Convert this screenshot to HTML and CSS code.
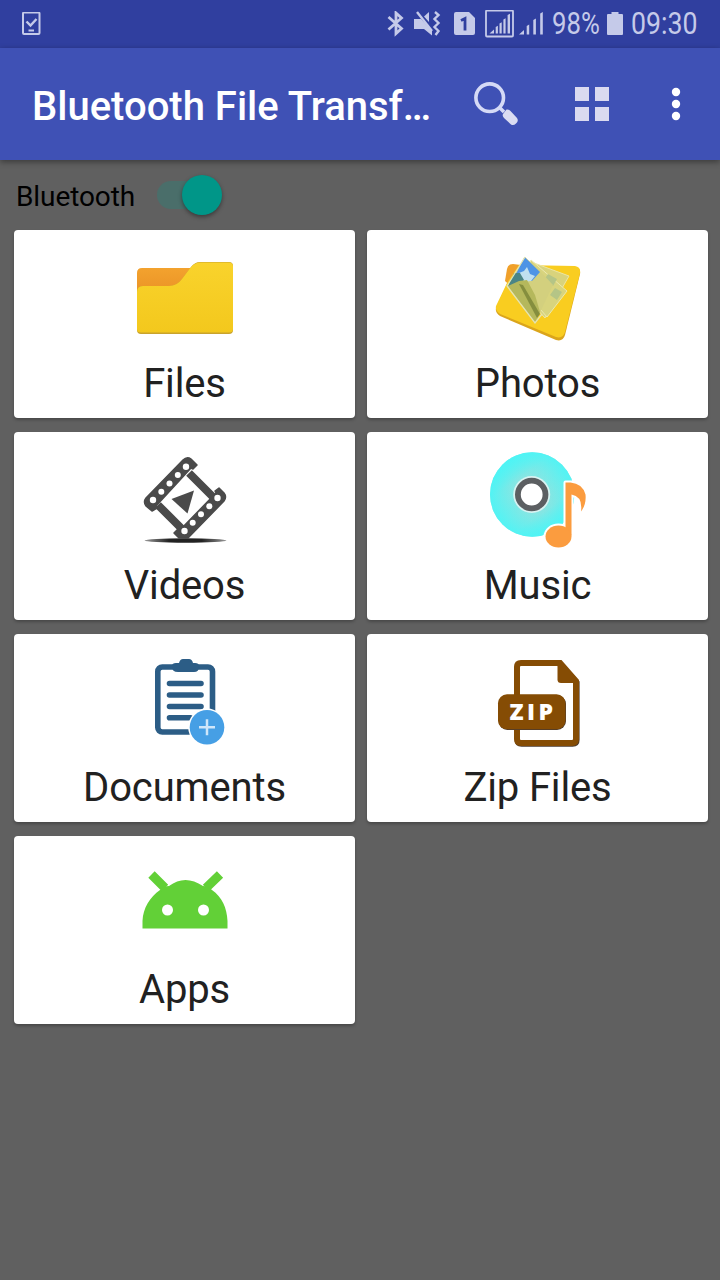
FILE: index.html
```html
<!DOCTYPE html>
<html lang="en">
<head>
    <meta charset="UTF-8">
    <meta name="viewport" content="width=device-width, initial-scale=1.0">
    <title>Bluetooth File Transfer</title>
    <link rel="stylesheet" href="styles.css">
</head>
<body>
    <div class="status-bar">
        <svg class="task-icon" width="20" height="24" viewBox="0 0 20 24" fill="none" stroke="#c5cae9" stroke-width="2">
            <rect x="2" y="0.500" width="16.500" height="21.500" rx="1"/>
            <path d="M5.500 9.500l4 4 6-6.500" stroke-width="2.400"/>
            <path d="M7.500 18.500h5.500"/>
        </svg>
        <div class="status-icons">
            <svg class="bt-icon" width="18" height="26" viewBox="0 0 18 26" fill="none" stroke="#c5cae9" stroke-width="2.800">
                <path d="M1.500 6L14.500 17.500L9 22.500V2L14.500 7L1.500 18.500"/>
            </svg>
            <svg class="mute-icon" width="28" height="26" viewBox="0 0 28 26" fill="#c5cae9">
                <path d="M0 8h7l11 12v4.500l-8-6.500H0z"/>
                <path d="M10 5.500l5-4.500v10z"/>
                <path d="M3 1l15 19" stroke="#c5cae9" stroke-width="2.400"/>
                <path d="M21 1l3.500 3-4 4 4 4-4 4 4 4-3 4" fill="none" stroke="#c5cae9" stroke-width="2.400"/>
            </svg>
            <svg class="sim-icon" width="21" height="24" viewBox="0 0 21 24">
                <path d="M2 0h13l6 6v15q0 2-2 2H2q-2 0-2-2V2q0-2 2-2z" fill="#c5cae9"/>
                <path d="M7 8.500l4-2v12" fill="none" stroke="#303f9f" stroke-width="2.800"/>
            </svg>
            <svg class="signal-box" width="29" height="28" viewBox="0 0 29 28" fill="#c5cae9">
                <rect x="1" y="0.500" width="27" height="26" rx="1" fill="none" stroke="#c5cae9" stroke-width="1.800"/>
                <path d="M4.500 23.500l4.500-4v4zM10.700 17l2.200-1.200v7.700h-2.200zM14.500 13.500l2.200-1.200v11.200h-2.200zM18.400 9.500l2.200-1.200v15.200h-2.200zM22.600 5l2.400-1.200v19.700h-2.400z"/>
            </svg>
            <svg class="signal-icon" width="25" height="24" viewBox="0 0 25 24" fill="#c5cae9">
                <path d="M0 22.500l5-4.500v4.500zM7.700 14l2.500-1.500v10H7.700zM14.300 8l2.600-1.500v16h-2.600zM21.200 1.500l2.600-1.500v22.500h-2.600z"/>
            </svg>
            <span class="battery-text">98%</span>
            <svg class="battery-icon" width="16" height="24" viewBox="0 0 16 24">
                <path d="M4.500 0h7v2H15q1 0 1 1v19q0 1-1 1H1q-1 0-1-1V3q0-1 1-1h3.500z" fill="#c5cae9"/>
            </svg>
            <span class="clock">09:30</span>
        </div>
    </div>

    <div class="app-bar">
        <h1 class="title">Bluetooth File Transf…</h1>
        <svg class="search-icon" width="48" height="48" viewBox="0 0 48 48" fill="none" stroke="#d5daf6">
            <circle cx="17.700" cy="17.700" r="13.800" stroke-width="3.600"/>
            <path d="M27 27l5 5" stroke-width="3.500"/>
            <path d="M31 34l3.500-4.500q2-.5 4 1.500l6.500 7q2 3-1 5.500-2.500 2.500-5 1l-7-6.500q-2-2-1-4z" fill="#dadcf2" stroke="none"/>
        </svg>
        <svg class="grid-icon" width="34" height="34" viewBox="0 0 34 34" fill="#dadaf0">
            <path d="M0 0h14v14H0zM20 0h14v14H20zM0 20h14v14H0zM20 20h14v14H20z"/>
        </svg>
        <svg class="more-icon" width="10" height="34" viewBox="0 0 10 34" fill="#fff">
            <circle cx="5" cy="5" r="4.200"/>
            <circle cx="5" cy="17" r="4.200"/>
            <circle cx="5" cy="29" r="4.200"/>
        </svg>
    </div>

    <div class="switch-row">
        <span class="switch-label">Bluetooth</span>
        <div class="switch"><div class="thumb"></div></div>
    </div>

    <div class="grid">
        <div class="card">
            <svg class="icon" viewBox="0 0 96 96">
                <defs>
                    <linearGradient id="yellow" x1="0" y1="0" x2="0" y2="1">
                        <stop offset="0" stop-color="#f9d32c"/>
                        <stop offset="1" stop-color="#f3c81d"/>
                    </linearGradient>
                    <linearGradient id="orange" x1="0" y1="0" x2="0" y2="1">
                        <stop offset="0" stop-color="#f3a22e"/>
                        <stop offset="1" stop-color="#e88f24"/>
                    </linearGradient>
                </defs>
                <path d="M0 50V23q0-5 5-5h55v32z" fill="url(#orange)"/>
                <path d="M0 80V42q0-6 6-6h26q8 0 13-7l9-12q4-5 9-5h29q4 0 4 4v64q0 4-4 4H4q-4 0-4-4z" fill="#c9a32c"/>
                <path d="M0 79V42q0-6 6-6h26q8 0 13-7l9-12q4-4.500 9-4.500h29q4 0 4 4V79q0 3.500-4 3.500H4Q0 82.500 0 79z" fill="url(#yellow)"/>
            </svg>
            <div class="label">Files</div>
        </div>
        <div class="card">
            <svg class="icon" viewBox="0 0 96 96">
                <path d="M15 31l2-12q1-5 6-5l8 1-8 23z" fill="#f0a02a"/>
                <path d="M17 34l12-18 56 1q6 1 5 7L75 85q-2 7-9 5L10 66q-5-3-4-8z" fill="#dba51b"/>
                <path d="M17 33l12-18 56 1q6 1 5 7L75 82q-2 7-9 5L10 64q-5-3-4-8z" fill="#f9cd20"/>
                <path d="M44 13l35 13-24 42-23-25z" fill="#d9d37c" stroke="#ece6a3" stroke-width="1"/>
                <path d="M41 10l36 31-20 26-26-30z" fill="#d8d47e" stroke="#ece9ad" stroke-width="1"/>
                <path d="M58 24l9 5-4 7-9-6zM65 38l7 4-5 8-7-5zM51 34l6 4-4 7-6-5z" fill="#b5c586"/>
                <path d="M35 7l15 14 13 14-18 38L17 36z" fill="#d3d07e"/>
                <path d="M34.500 7L50 22l-8 9-16-7z" fill="#4e94e5"/>
                <path d="M29 23l5-2 3-4 3 7 5 2-4 5-8 1z" fill="#c0e0f0"/>
                <path d="M24 23l6 0 4 7-5 5-11 1z" fill="#4a8586"/>
                <path d="M18 36l11-5 8-1 8 15 5 17-5 11z" fill="#b5b85c"/>
                <path d="M29 34l4 1 17 29-3 4z" fill="#858e3e"/>
                <path d="M35 7L17 36l28 37 7-9" fill="none" stroke="#e4e3b3" stroke-width="1.300"/>
            </svg>
            <div class="label">Photos</div>
        </div>
        <div class="card">
            <svg class="icon" viewBox="0 0 96 96">
                <defs>
                    <linearGradient id="shade">
                        <stop offset="0" stop-color="#999"/>
                        <stop offset="0.300" stop-color="#222"/>
                        <stop offset="0.700" stop-color="#222"/>
                        <stop offset="1" stop-color="#999"/>
                    </linearGradient>
                </defs>
                <ellipse cx="48.500" cy="88.500" rx="41" ry="2.200" fill="url(#shade)"/>
                <path d="M52 21l25 25M21 53l26 26" stroke="#4a4a4a" stroke-width="8"/>
                <path d="M9 46L46 8q4-4 8-1l6 6-4 4-2-1L19 54l1 2-5 3-6-5q-3-4 0-8z" fill="#4a4a4a" stroke="#4a4a4a" stroke-width="1.500" stroke-linejoin="round"/>
                <path d="M37 81l4-4 2 1 36-37-1-2 4-3 5 5q3 4 0 8L51 86h-9l-5-5z" fill="#4a4a4a" stroke="#4a4a4a" stroke-width="1.500" stroke-linejoin="round"/>
                <g fill="#fff">
                    <circle cx="16" cy="48" r="3.200"/>
                    <circle cx="24.300" cy="39.700" r="3"/>
                    <circle cx="32.500" cy="31.500" r="3"/>
                    <circle cx="40.800" cy="23" r="3"/>
                    <circle cx="49" cy="14.700" r="3.200"/>
                    <circle cx="47.500" cy="79" r="3.200"/>
                    <circle cx="55.700" cy="70.700" r="3"/>
                    <circle cx="64" cy="62.300" r="3"/>
                    <circle cx="72.300" cy="54.300" r="3"/>
                    <circle cx="80.500" cy="46" r="3.200"/>
                </g>
                <path d="M34.500 47L57 38.500 50.500 61.500z" fill="#4a4a4a"/>
            </svg>
            <div class="label">Videos</div>
        </div>
        <div class="card">
            <svg class="icon" viewBox="0 0 96 96">
                <defs>
                    <linearGradient id="disc" x1="0.150" y1="0" x2="0.850" y2="1">
                        <stop offset="0" stop-color="#48f5f6"/>
                        <stop offset="0.300" stop-color="#8ce4e1"/>
                        <stop offset="0.500" stop-color="#80e8e5"/>
                        <stop offset="0.700" stop-color="#8ce4e1"/>
                        <stop offset="1" stop-color="#48f5f6"/>
                    </linearGradient>
                    <radialGradient id="rim">
                        <stop offset="0.400" stop-color="#4cf5f6" stop-opacity="0"/>
                        <stop offset="1" stop-color="#4cf5f6" stop-opacity="0.900"/>
                    </radialGradient>
                </defs>
                <circle cx="42.200" cy="42.500" r="42.200" fill="url(#disc)"/>
                <circle cx="42.200" cy="42.500" r="42.200" fill="url(#rim)"/>
                <circle cx="41.700" cy="42.500" r="18.500" fill="#d8f3f2"/>
                <circle cx="41.700" cy="42.500" r="13.800" fill="#fff" stroke="#5c5f62" stroke-width="5.800"/>
                <g stroke="#fff" stroke-width="4" stroke-linejoin="round" fill="#fff">
                    <path d="M75.500 30.500h6q1 1 6 3 10 5 8 17l-4.500 9q2-15-9.500-17v41h-6z"/>
                    <ellipse cx="68.500" cy="84.500" rx="13" ry="11"/>
                </g>
                <g fill="#fb9c3f">
                    <path d="M75.500 30.500h5q12 1 15 12 1 10-4.500 17 2-15-9.500-17v41h-6z"/>
                    <ellipse cx="68.500" cy="84.500" rx="13" ry="11"/>
                </g>
            </svg>
            <div class="label">Music</div>
        </div>
        <div class="card">
            <svg class="icon" viewBox="0 0 96 96">
                <rect x="20.800" y="13" width="54.700" height="65" rx="4.500" fill="none" stroke="#2c5d86" stroke-width="5.600"/>
                <path d="M35 12q0-3 4-3h3q1-4 4-4h6q3 0 4 4h2q4 0 4 3v1q0 5-5 5H41q-6 0-6-5z" fill="#2c5d86"/>
                <path d="M32.500 29.500h31.500M32.500 41h31.500M32.500 52.500h31.500M32.500 63.700h21" stroke="#2c5d86" stroke-width="5.600" stroke-linecap="round"/>
                <circle cx="70" cy="73.300" r="18.800" fill="#fff"/>
                <circle cx="70" cy="73.300" r="17.300" fill="#469fe5"/>
                <path d="M62 73.300h16M70 65.300v16" stroke="#cfe6fa" stroke-width="2.500"/>
            </svg>
            <div class="label">Documents</div>
        </div>
        <div class="card">
            <svg class="icon" viewBox="0 0 96 96">
                <path d="M31 9h38l17 19v57q0 4-4 4H31q-4 0-4-4V13q0-4 4-4z" fill="none" stroke="#4a3a30" stroke-width="6" transform="translate(0.600 0.700)"/>
                <path d="M31 9h38l17 19v57q0 4-4 4H31q-4 0-4-4V13q0-4 4-4z" fill="#fff" stroke="#854c04" stroke-width="6"/>
                <path d="M67.500 6h4L89 26v3H71q-3.500 0-3.500-3.500z" fill="#854c04"/>
                <rect x="8.500" y="41" width="67.500" height="35" rx="9" fill="#4a3a30"/>
                <rect x="8" y="40.300" width="67.500" height="35" rx="9" fill="#854c04"/>
                <text class="zip-text" x="19.500" y="65.500" textLength="43.500">ZIP</text>
            </svg>
            <div class="label">Zip Files</div>
        </div>
        <div class="card">
            <svg class="icon" viewBox="0 0 96 96">
                <path d="M5.500 72.500V65C6 52 13 41 23 34q4-4 9-4 16-12 34 0 5 0 9 4c10 7 15 18 15.500 31v7.500z" fill="#62d037"/>
                <path d="M14.500 18.500L28 32M83 18.500L69 32" stroke="#62d037" stroke-width="9"/>
                <circle cx="30.500" cy="54" r="5.500" fill="#fff"/>
                <circle cx="66.500" cy="54" r="5.500" fill="#fff"/>
            </svg>
            <div class="label">Apps</div>
        </div>
    </div>
</body>
</html>
```
FILE: styles.css
```css
* {
    box-sizing: border-box;
}

body {
    font-family: Roboto, 'Liberation Sans', sans-serif;
    background-color: #606060;
    color: #212121;
    margin: 0;
    min-height: 100vh;
}

svg {
    display: block;
    flex-shrink: 0;
}

.status-bar {
    height: 48px;
    background-color: #303f9f;
    color: #c5cae9;
    display: flex;
    justify-content: space-between;
    align-items: center;
    padding: 0 22px 0 21px;
}

.status-icons {
    display: flex;
    align-items: center;
    font-size: 31px;
    line-height: 48px;
}

.mute-icon {
    margin-left: 9px;
}

.sim-icon {
    margin-left: 12px;
}

.signal-box {
    margin-left: 10px;
}

.signal-icon {
    margin-left: 5px;
}

/* condensed digits */
.battery-text,
.clock {
    transform: scaleX(0.83);
    transform-origin: left;
    white-space: nowrap;
}

.battery-text {
    width: 48px;
    margin-left: 8px;
}

.battery-icon {
    margin-left: 7px;
}

.clock {
    width: 67px;
    margin-left: 8px;
    transform: scaleX(0.86);
}

.app-bar {
    position: relative;
    height: 112px;
    background-color: #3f51b5;
    box-shadow: 0 2px 6px rgba(0, 0, 0, 0.4);
    display: flex;
    align-items: center;
    padding: 0 39px 0 32px;
}

.title {
    width: 440px;
    margin: 5px 0 0;
    color: #fff;
    font-size: 40px;
    font-weight: 500;
    white-space: nowrap;
}

.grid-icon {
    margin-left: 55px;
}

.more-icon {
    margin-left: 62px;
}

.switch-row {
    height: 70px;
    padding: 0 16px;
    display: flex;
    align-items: center;
    color: #000;
    font-size: 28px;
}

.switch-label {
    width: 119px;
    margin-top: 2px;
    letter-spacing: -0.1px;
}

.switch {
    width: 55px;
    height: 28px;
    margin-left: 22px;
    border-radius: 14px;
    background-color: #4a6e6a;
    display: flex;
    align-items: center;
    justify-content: flex-end;
}

.thumb {
    flex-shrink: 0;
    width: 40px;
    height: 40px;
    margin-right: -10px;
    border-radius: 50%;
    background-color: #009688;
    box-shadow: 0 2px 4px rgba(0, 0, 0, 0.4);
}

.grid {
    display: grid;
    grid-template-columns: 341px 341px;
    gap: 14px 12px;
    padding: 0 12px 0 14px;
}

.card {
    height: 188px;
    padding-top: 20px;
    background-color: #fff;
    border-radius: 4px;
    box-shadow: 0 2px 3px rgba(0, 0, 0, 0.25);
    display: flex;
    flex-direction: column;
    align-items: center;
}

.icon {
    width: 96px;
    height: 96px;
}

.label {
    margin-top: 14px;
    font-size: 40px;
    line-height: 47px;
    letter-spacing: -0.15px;
}

.zip-text {
    font-family: 'Open Sans', sans-serif;
    font-size: 23px;
    font-weight: 800;
    fill: #fff;
}
```
